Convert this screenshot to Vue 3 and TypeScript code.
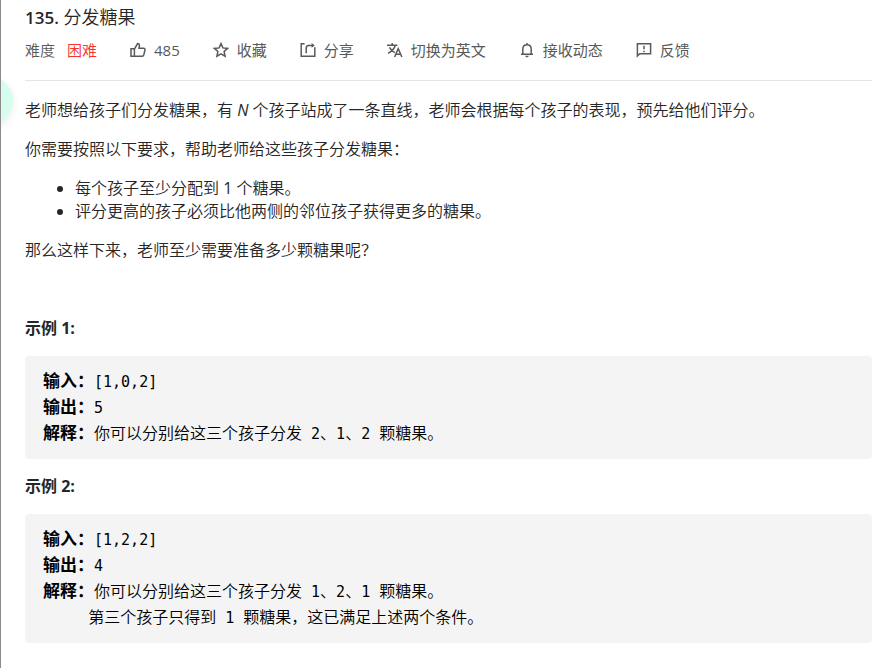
<script setup lang="ts">
interface Action {
  icon: string
  label: string
}

interface Line {
  label?: string
  text: string
}

interface Example {
  title: string
  lines: Line[]
}

const actions: Action[] = [
  { icon: 'like', label: '485' },
  { icon: 'star', label: '收藏' },
  { icon: 'share', label: '分享' },
  { icon: 'translate', label: '切换为英文' },
  { icon: 'bell', label: '接收动态' },
  { icon: 'feedback', label: '反馈' },
]

const examples: Example[] = [
  {
    title: '示例 1:',
    lines: [
      { label: '输入：', text: '[1,0,2]' },
      { label: '输出：', text: '5' },
      { label: '解释：', text: '你可以分别给这三个孩子分发 2、1、2 颗糖果。' },
    ],
  },
  {
    title: '示例 2:',
    lines: [
      { label: '输入：', text: '[1,2,2]' },
      { label: '输出：', text: '4' },
      { label: '解释：', text: '你可以分别给这三个孩子分发 1、2、1 颗糖果。' },
      { text: '     第三个孩子只得到 1 颗糖果，这已满足上述两个条件。' },
    ],
  },
]

// Chinese runs are set one size larger than the monospaced runs between them.
function runs(text: string): { text: string; han: boolean }[] {
  const parts = text.match(/[\x00-\x7f]+|[^\x00-\x7f]+/g) ?? []
  return parts.map((part) => ({ text: part, han: part.charCodeAt(0) > 127 }))
}
</script>

<template>
  <main class="problem">
    <button class="bubble" type="button" aria-label="菜单"></button>
    <header class="head">
      <h1 class="title"><span class="number">135.</span> 分发糖果</h1>
      <div class="toolbar">
        <div class="difficulty"><span>难度</span><span class="hard">困难</span></div>
        <button v-for="action in actions" :key="action.icon" class="action" type="button">
          <svg v-if="action.icon === 'like'" class="icon" viewBox="0 0 16 16">
            <path d="M1 6.800h3.400v7.400H1zM4.400 7.200L7.600 1.600c1.400 0 2 .9 1.800 2.200L9 6.200h4.600c1 0 1.600.8 1.400 1.700l-1.200 5c-.2.8-.8 1.300-1.600 1.300H4.400" />
          </svg>
          <svg v-else-if="action.icon === 'star'" class="icon" viewBox="0 0 16 16">
            <path d="M8 1.600l1.900 4.300 4.700.5-3.500 3.100 1 4.700L8 11.800l-4.100 2.400 1-4.700-3.500-3.100 4.700-.5z" />
          </svg>
          <svg v-else-if="action.icon === 'share'" class="icon" viewBox="0 0 16 16">
            <path d="M4.600 1.800H1.200v12.400h13.600V5.200M6.200 11.200V6.200C6.200 4.400 7 3.400 8.400 3.400h4.400" />
            <path class="solid" d="M11.600 1l3.200 2.400-3.200 2.400z" />
          </svg>
          <svg v-else-if="action.icon === 'translate'" class="icon" viewBox="0 0 16 16">
            <path d="M0 3.200h10.400M5.200 1v2.200M8.300 3.200C7.500 6.400 4.600 9.400 1 11.400M2.500 5.400C3.600 7.600 5.500 9.500 7.800 10.700M7.600 15l3.600-8.400L14.900 15M8.900 12.200h4.700" />
          </svg>
          <svg v-else-if="action.icon === 'bell'" class="icon" viewBox="0 0 16 16">
            <path d="M2 12.300h12M3.800 12.300V7.200C3.800 4.500 5.500 2.700 8 2.700s4.200 1.800 4.200 4.500v5.100M8 1v1.700" />
            <path class="solid" d="M6.400 13.700h3.200c0 .9-.7 1.600-1.600 1.600s-1.600-.7-1.600-1.600z" />
          </svg>
          <svg v-else class="icon" viewBox="0 0 16 16">
            <path d="M1.400 14V1.700h13.200v10H3.700zM8 3.800v3.500M8 8.700v1.500" />
          </svg>
          <span>{{ action.label }}</span>
        </button>
      </div>
    </header>

    <article class="content">
      <p>老师想给孩子们分发糖果，有 <em>N</em> 个孩子站成了一条直线，老师会根据每个孩子的表现，预先给他们评分。</p>
      <p>你需要按照以下要求，帮助老师给这些孩子分发糖果：</p>
      <ul>
        <li>每个孩子至少分配到 <span class="latin">1</span> 个糖果。</li>
        <li>评分更高的孩子必须比他两侧的邻位孩子获得更多的糖果。</li>
      </ul>
      <p>那么这样下来，老师至少需要准备多少颗糖果呢？</p>
      <p>&nbsp;</p>
      <template v-for="example in examples" :key="example.title">
        <p><strong>{{ example.title }}</strong></p>
        <div class="sample">
          <div v-for="(line, i) in example.lines" :key="i" class="line"><strong v-if="line.label">{{ line.label }}</strong><span v-for="(run, j) in runs(line.text)" :key="j" :class="{ han: run.han }">{{ run.text }}</span></div>
        </div>
      </template>
    </article>
  </main>
</template>

<style>
body {
  margin: 0;
  background: #fff;
}
</style>

<style scoped>
.problem {
  position: relative;
  box-sizing: border-box;
  min-height: 100vh;
  padding: 5px 17px 24px 24px;
  border-left: 1px solid #8c8c8c;
  overflow: hidden;
  color: #262626;
  font-family: "Open Sans", "Noto Sans CJK SC", sans-serif;
  font-size: 16px;
  font-weight: 350;
  line-height: 23px;
}

.bubble {
  position: absolute;
  top: 76px;
  left: -37px;
  width: 49px;
  height: 49px;
  padding: 0;
  border: 0;
  border-radius: 50%;
  background: #d6fdee;
  box-shadow: 0 3px 8px rgba(0, 0, 0, 0.08);
}

.head {
  padding-bottom: 18px;
  border-bottom: 1px solid #e5e5e5;
}

.title {
  margin: 0;
  font-size: 18px;
  font-weight: 350;
  line-height: 24px;
}

.number {
  font-size: 17px;
  font-weight: 600;
}

.toolbar {
  display: flex;
  flex-wrap: wrap;
  gap: 33px;
  margin-top: 8px;
  color: #595959;
  font-size: 15px;
  line-height: 24px;
}

.difficulty {
  display: flex;
  gap: 12px;
}

.hard {
  color: #f5352b;
}

.action {
  display: flex;
  align-items: center;
  gap: 8px;
  padding: 0;
  border: 0;
  background: none;
  color: inherit;
  font: inherit;
  font-weight: 400;
  cursor: pointer;
}

.icon {
  width: 16px;
  height: 16px;
  fill: none;
  stroke: currentColor;
  stroke-width: 1.5;
}

.solid {
  fill: currentColor;
  stroke: none;
}

.content {
  padding-top: 18px;
}

.content p,
.content ul {
  margin: 0 0 16px;
}

.content ul {
  padding-left: 50px;
}

.content strong {
  font-weight: 700;
}

.content em,
.latin {
  font-weight: 400;
}

.sample {
  margin-bottom: 16px;
  padding: 13px 18px 12px;
  border-radius: 4px;
  background: #f4f4f4;
  color: #000;
  font-family: "DejaVu Sans Mono", "Noto Sans CJK SC", monospace;
  font-size: 15px;
  line-height: 26px;
}

.line {
  min-height: 26px;
  white-space: pre-wrap;
}

.line > * {
  line-height: 1;
}

.sample strong {
  font-size: 17px;
}

.han {
  font-family: "Noto Sans CJK SC", sans-serif;
  font-size: 16px;
}
</style>
